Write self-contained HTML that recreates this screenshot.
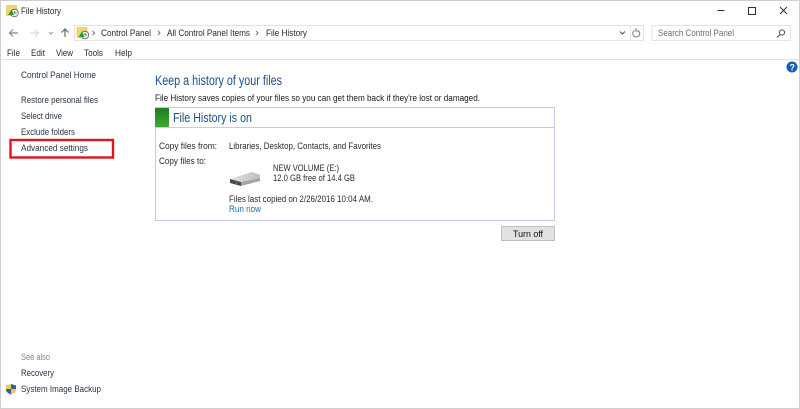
<!DOCTYPE html>
<html><head><meta charset="utf-8"><style>
html,body{margin:0;padding:0;background:#fff;width:800px;height:409px;overflow:hidden}
svg{display:block}
text{font-family:"Liberation Sans",sans-serif;font-size:9.6px;fill:#2a2a2a}
#all{filter:blur(.25px)}
</style></head><body>
<svg width="800" height="409" viewBox="0 0 800 409" xmlns="http://www.w3.org/2000/svg">
<defs>
<linearGradient id="g" x1="0" y1="0" x2="0" y2="1"><stop offset="0" stop-color="#1f7f1f"/><stop offset="1" stop-color="#3fa832"/></linearGradient>
<linearGradient id="d" x1="0" y1="0" x2="1" y2="0"><stop offset="0" stop-color="#e4e4e4"/><stop offset="1" stop-color="#bdbdbd"/></linearGradient>
<g id="fh"><rect x="0" y="0" width="10" height="10" fill="#f3d56e" stroke="#e0c25a" stroke-width=".6"/><circle cx="8" cy="7.500" r="3.800" fill="#e8efe8" stroke="#5a6a5a" stroke-width=".8"/><path d="M1.500 9.500 L5 4 L7.500 9.500Z" fill="#2f9a22"/><path d="M8 5.500V7.500H10" stroke="#444" fill="none" stroke-width=".7"/></g>
</defs>
<g id="all">
<rect x=".5" y=".5" width="799" height="408" fill="#fff" stroke="#d0d0d0"/>
<use href="#fh" x="6.500" y="5.500"/>
<text x="21" y="14" textLength="40" lengthAdjust="spacingAndGlyphs">File History</text>
<path d="M717.500 10.500h7" stroke="#333" fill="none"/>
<rect x="748.500" y="7.500" width="7" height="7" fill="none" stroke="#333"/>
<path d="M780 7l7 7M787 7l-7 7" stroke="#333" fill="none"/>
<path d="M18 33h-8M13 29.500l-3.500 3.500 3.500 3.500" stroke="#888" fill="none" stroke-width="1.200"/>
<path d="M30 33h8M35 29.500l3.500 3.500-3.500 3.500" stroke="#dcdcdc" fill="none" stroke-width="1.200"/>
<path d="M49 32l2 2 2-2" stroke="#999" fill="none"/>
<path d="M65 37v-8M61.500 32.500l3.500-3.500 3.500 3.500" stroke="#666" fill="none" stroke-width="1.200"/>
<rect x="74.500" y="25.500" width="556" height="15" fill="#fff" stroke="#e3e3e3"/>
<rect x="630.500" y="25.500" width="13" height="15" fill="#fff" stroke="#e3e3e3"/>
<use href="#fh" x="77" y="27.500"/>
<path d="M92.500 31l2 2-2 2M158 31l2 2-2 2M256 31l2 2-2 2" stroke="#777" fill="none"/>
<text x="101" y="36" textLength="50" lengthAdjust="spacingAndGlyphs">Control Panel</text>
<text x="167" y="36" textLength="83" lengthAdjust="spacingAndGlyphs">All Control Panel Items</text>
<text x="266" y="36" textLength="41" lengthAdjust="spacingAndGlyphs">File History</text>
<path d="M620 31.500l2.500 2.500 2.500-2.500" stroke="#555" fill="none" stroke-width="1.100"/>
<path d="M634.500 30.500a3.500 3.500 0 1 0 3.500 0M636 28v3h3" stroke="#777" fill="none"/>
<rect x="652" y="25.500" width="138.500" height="15" fill="#fff" stroke="#e3e3e3"/>
<text x="658" y="36" textLength="76" lengthAdjust="spacingAndGlyphs" style="fill:#6d6d6d">Search Control Panel</text>
<circle cx="782" cy="32.500" r="2.600" fill="none" stroke="#555"/><path d="M780 34.500l-3 3" stroke="#555" stroke-width="1.200"/>
<text x="7" y="56" textLength="13" lengthAdjust="spacingAndGlyphs">File</text>
<text x="31" y="56" textLength="14" lengthAdjust="spacingAndGlyphs">Edit</text>
<text x="56" y="56" textLength="17" lengthAdjust="spacingAndGlyphs">View</text>
<text x="84" y="56" textLength="19" lengthAdjust="spacingAndGlyphs">Tools</text>
<text x="115" y="56" textLength="17" lengthAdjust="spacingAndGlyphs">Help</text>
<rect x="1" y="59" width="798" height="1" fill="#e2e2e2"/>
<circle cx="792" cy="67" r="5.500" fill="#0f5fb0"/>
<text x="789.500" y="70.500" style="fill:#fff;font-size:9px;font-weight:bold">?</text>
<text x="21" y="78" textLength="75" lengthAdjust="spacingAndGlyphs" style="fill:#26364a">Control Panel Home</text>
<text x="21" y="103" textLength="77" lengthAdjust="spacingAndGlyphs" style="fill:#26364a">Restore personal files</text>
<text x="21" y="119" textLength="41" lengthAdjust="spacingAndGlyphs" style="fill:#26364a">Select drive</text>
<text x="21" y="135" textLength="54" lengthAdjust="spacingAndGlyphs" style="fill:#26364a">Exclude folders</text>
<text x="21" y="151" textLength="67" lengthAdjust="spacingAndGlyphs" style="fill:#26364a">Advanced settings</text>
<rect x="10.500" y="140" width="102.500" height="17.500" fill="none" stroke="#e0141f" stroke-width="2.400"/>
<text x="21" y="360" textLength="29" lengthAdjust="spacingAndGlyphs" style="fill:#888">See also</text>
<text x="21" y="376" textLength="33" lengthAdjust="spacingAndGlyphs" style="fill:#26364a">Recovery</text>
<path d="M11 384v5h5v.500c0 2.500-2.500 4-5 5zM6 385.500l5-1.500v5H6z" fill="#f0c84a"/>
<path d="M11 384l5 1.500V389h-5zM6 389h5v5.500c-2.500-1-5-2.500-5-5z" fill="#2f5fa8"/>
<text x="21" y="392" textLength="80" lengthAdjust="spacingAndGlyphs" style="fill:#26364a">System Image Backup</text>
<text x="155" y="85" textLength="127" lengthAdjust="spacingAndGlyphs" style="fill:#1d4f8c;font-size:13.500px">Keep a history of your files</text>
<text x="155" y="101" textLength="325" lengthAdjust="spacingAndGlyphs" style="fill:#1a1a1a">File History saves copies of your files so you can get them back if they're lost or damaged.</text>
<rect x="155.500" y="107.500" width="399" height="113" fill="#fff" stroke="#c6cbe6"/>
<path d="M156 127.500h398" stroke="#c6cbe6"/>
<rect x="155" y="108" width="14" height="19" fill="url(#g)"/>
<text x="173" y="122" textLength="79" lengthAdjust="spacingAndGlyphs" style="fill:#1d4f8c;font-size:12.500px">File History is on</text>
<text x="159" y="149" textLength="58" lengthAdjust="spacingAndGlyphs">Copy files from:</text>
<text x="229" y="149" textLength="152" lengthAdjust="spacingAndGlyphs">Libraries, Desktop, Contacts, and Favorites</text>
<text x="159" y="164" textLength="47" lengthAdjust="spacingAndGlyphs">Copy files to:</text>
<path d="M230 179l22-7 8 3v3l-19 4z" fill="url(#d)"/>
<path d="M230 179l11 3v4l-11-3z" fill="#4a4a4a"/>
<path d="M241 182l19-4v3l-19 5z" fill="#a4a4a4"/>
<circle cx="236.500" cy="183" r=".7" fill="#4fc04f"/>
<text x="273" y="171" textLength="66" lengthAdjust="spacingAndGlyphs">NEW VOLUME (E:)</text>
<text x="273" y="181" textLength="82" lengthAdjust="spacingAndGlyphs">12.0 GB free of 14.4 GB</text>
<text x="229" y="202" textLength="144" lengthAdjust="spacingAndGlyphs">Files last copied on 2/26/2016 10:04 AM.</text>
<text x="229" y="212" textLength="32" lengthAdjust="spacingAndGlyphs" style="fill:#1c6cb0">Run now</text>
<rect x="501.500" y="226.500" width="53" height="14" fill="#e1e1e1" stroke="#c0c0c0"/>
<text x="513" y="237" textLength="30" lengthAdjust="spacingAndGlyphs" style="fill:#111">Turn off</text>
</g>
</svg>
</body></html>
